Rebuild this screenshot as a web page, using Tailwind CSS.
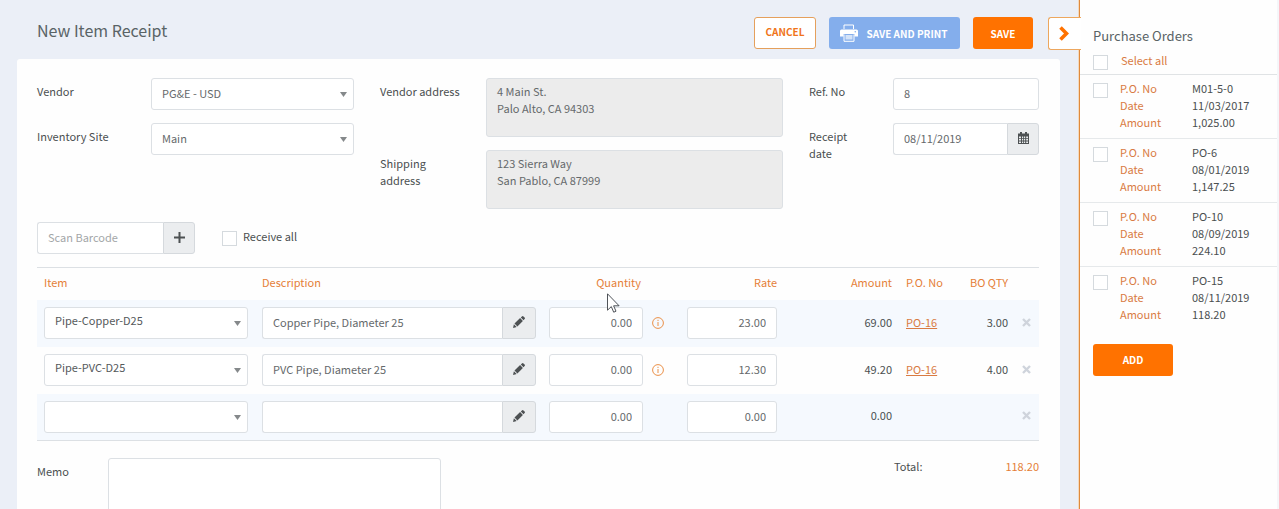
<!DOCTYPE html>
<html lang="en">

<head>
    <meta charset="UTF-8">
    <meta name="viewport" content="width=device-width, initial-scale=1.0">
    <title>New Item Receipt</title>
    <script src="https://cdn.jsdelivr.net/npm/@tailwindcss/browser@4"></script>
</head>

<body class="flex h-screen overflow-hidden bg-[#ebeff7] font-['Noto_Sans_CJK_SC','Open_Sans',sans-serif] text-[11px] leading-[17px] text-[#4a4f50]">

    <main class="flex min-w-0 flex-1 flex-col pl-[17px] pr-[19px]">
        <header class="flex h-[59px] shrink-0 items-start pt-[17px] pl-5 pr-[27px]">
            <h1 class="flex-1 text-[16px] leading-[26px] text-[#596366]">New Item Receipt</h1>
            <div class="flex gap-[13px]">
                <button type="button" class="h-8 w-[62px] rounded-[3px] border border-[#e5a05c] bg-white pb-[3px] text-[10px] font-bold text-[#f0741a]">CANCEL</button>
                <button type="button" class="flex h-8 w-[131px] items-center justify-center gap-[9px] rounded-[3px] bg-[#84aeec] pr-[2px] text-[10px] font-bold text-white">
                    <svg class="h-[18px] w-[18px]" viewBox="0 0 18 18" fill="none">
                        <path d="M4 5V1h9.500v4" stroke="currentColor" stroke-width="1" />
                        <path d="M1.500 5.500h15a1.500 1.500 0 0 1 1.500 1.500v5.500h-3.500V10h-11v2.500H0V7a1.500 1.500 0 0 1 1.500-1.500z" fill="currentColor" />
                        <circle cx="15.300" cy="7.800" r=".8" fill="#84aeec" />
                        <path d="M4 10.500v6.800h10v-6.800" stroke="currentColor" stroke-width="1" />
                        <path d="M5.500 11h7v4.500h-7z" fill="currentColor" fill-opacity=".65" />
                    </svg>
                    SAVE AND PRINT
                </button>
                <button type="button" class="h-8 w-[60px] rounded-[3px] bg-[#ff7200] text-[10px] font-bold text-white">SAVE</button>
            </div>
        </header>

        <section class="flex-1 rounded-t-[3px] bg-[#fefefe] pl-5 pr-[21px] pt-[19px]">
            <!-- Receipt details -->
            <div class="flex items-start">
                <div class="grid flex-1 grid-cols-[114px_1fr] gap-y-[13px]">
                    <label for="vendor" class="pt-[5px]">Vendor</label>
                    <div class="relative">
                        <select id="vendor" class="h-8 w-full appearance-none rounded-[3px] border border-[#dce0e4] bg-white pb-px pl-[10px] text-[#65696b]">
                            <option>PG&amp;E - USD</option>
                        </select>
                        <svg class="pointer-events-none absolute right-[7px] top-[14px] h-[5px] w-[7px]" viewBox="0 0 7 5"><path d="M0 0h7L3.500 5z" fill="#85898b" /></svg>
                    </div>
                    <label for="site" class="pt-[5px]">Inventory Site</label>
                    <div class="relative">
                        <select id="site" class="h-8 w-full appearance-none rounded-[3px] border border-[#dce0e4] bg-white pb-px pl-[10px] text-[#65696b]">
                            <option>Main</option>
                        </select>
                        <svg class="pointer-events-none absolute right-[7px] top-[14px] h-[5px] w-[7px]" viewBox="0 0 7 5"><path d="M0 0h7L3.500 5z" fill="#85898b" /></svg>
                    </div>
                </div>
                <div class="ml-[26px] grid w-[403px] grid-cols-[106px_1fr] gap-y-[13px]">
                    <label for="vendorAddress" class="pt-[5px]">Vendor address</label>
                    <textarea id="vendorAddress" readonly class="h-[59px] resize-none overflow-hidden rounded-[3px] border border-[#dce0e4] bg-[#ececec] px-[10px] py-1 text-[#65696b]">4 Main St.
Palo Alto, CA 94303</textarea>
                    <label for="shippingAddress" class="pr-8 pt-[5px]">Shipping address</label>
                    <textarea id="shippingAddress" readonly class="h-[59px] resize-none overflow-hidden rounded-[3px] border border-[#dce0e4] bg-[#ececec] px-[10px] py-1 text-[#65696b]">123 Sierra Way
San Pablo, CA 87999</textarea>
                </div>
                <div class="ml-[26px] grid w-[230px] grid-cols-[84px_1fr] gap-y-[13px]">
                    <label for="refNo" class="pt-[5px]">Ref. No</label>
                    <input id="refNo" type="text" value="8" class="h-8 w-full rounded-[3px] border border-[#dce0e4] bg-white px-[10px] pb-[2px] text-[#65696b]">
                    <label for="receiptDate" class="pr-8 pt-[5px]">Receipt date</label>
                    <div class="flex h-8">
                        <input id="receiptDate" type="text" value="08/11/2019" class="w-full min-w-0 flex-1 rounded-l-[3px] border border-r-0 border-[#dce0e4] bg-white px-[10px] pb-px text-[#65696b]">
                        <button type="button" aria-label="Pick date" class="flex w-8 items-center justify-center rounded-r-[3px] border border-[#d5d9dd] bg-[#ebedef] pb-[2px]">
                            <svg class="h-3 w-[11px]" viewBox="0 0 11 12">
                                <path d="M2 0h2v1.500h3V0h2v1.500h2V12H0V1.500h2z" fill="#4d5153" />
                                <path d="M1 4.500h2v1.800H1zM4 4.500h1.200v1.800H4zM6 4.500h1.200v1.800H6zM8.200 4.500H10v1.800H8.200zM1 7h2v1.600H1zM4 7h1.200v1.600H4zM6 7h1.200v1.600H6zM8.200 7H10v1.600H8.200zM1 9.400h2V11H1zM4 9.400h1.200V11H4zM6 9.400h1.200V11H6zM8.200 9.400H10V11H8.200z" fill="#ebedef" />
                            </svg>
                        </button>
                    </div>
                </div>
            </div>

            <!-- Barcode -->
            <div class="mt-[13px] flex h-8 items-center">
                <input type="text" aria-label="Scan Barcode" placeholder="Scan Barcode" class="h-8 w-[126px] rounded-l-[3px] border border-r-0 border-[#dce0e4] bg-white px-[10px] pb-[2px] placeholder:text-[#a3a6a8]">
                <button type="button" aria-label="Add barcode" class="flex h-8 w-8 items-center justify-center rounded-r-[3px] border border-[#d5d9dd] bg-[#ebedef] pb-[2px]">
                    <svg class="h-[11px] w-[11px]" viewBox="0 0 11 11"><path d="M5.500 0v11M0 5.500h11" stroke="#4d5153" stroke-width="2" /></svg>
                </button>
                <input id="receiveAll" type="checkbox" class="ml-[27px] h-[15px] w-[15px] appearance-none border border-[#d5dade] bg-white">
                <label for="receiveAll" class="ml-[6px] pb-1">Receive all</label>
            </div>

            <!-- Lines -->
            <table class="mt-[13px] w-full table-fixed border-y border-[#dce0e4]">
                <colgroup>
                    <col class="w-[218px]">
                    <col>
                    <col class="w-[108px]">
                    <col class="w-[30px]">
                    <col class="w-[104px]">
                    <col class="w-[115px]">
                    <col class="w-[60px]">
                    <col class="w-[56px]">
                    <col class="w-[24px]">
                </colgroup>
                <thead class="text-[#e57f38]">
                    <tr class="h-8">
                        <th class="px-[7px] pb-[2px] text-left font-normal">Item</th>
                        <th class="px-[7px] pb-[2px] text-left font-normal">Description</th>
                        <th class="relative px-[9px] pb-[2px] text-right font-normal">
                            Quantity
                            <svg class="absolute left-[65px] top-[25px] z-10 h-5 w-[13px]" viewBox="0 0 13 20">
                                <path d="M.5 .8v16.400l3.800-3.600 2.400 5.600 2.300-1-2.400-5.400h5.500z" fill="#fff" stroke="#3b3f46" stroke-width=".9" />
                            </svg>
                        </th>
                        <th></th>
                        <th class="px-[7px] pb-[2px] text-right font-normal">Rate</th>
                        <th class="px-[7px] pb-[2px] text-right font-normal">Amount</th>
                        <th class="px-[7px] pb-[2px] text-left font-normal">P.O. No</th>
                        <th class="px-[7px] pb-[2px] text-right font-normal">BO QTY</th>
                        <th></th>
                    </tr>
                </thead>
                <tbody id="lineas"></tbody>
            </table>

            <div class="mt-[17px] flex items-start">
                <label for="memo" class="w-[71px] pt-[5px]">Memo</label>
                <textarea id="memo" class="h-[72px] w-[333px] resize-none rounded-[3px] border border-[#dce0e4] bg-white px-[10px] py-1"></textarea>
                <div class="ml-auto flex w-[145px] justify-between">
                    <span>Total:</span>
                    <span class="text-[#e57f38]">118.20</span>
                </div>
            </div>
        </section>
    </main>

    <aside class="relative w-[200px] shrink-0 border-l border-r-2 border-l-[#e08a3c] border-r-[#f5f6f9] bg-[#fefefe] pt-[26px] shadow-[-1px_0_0_#f3d9bd]">
        <button type="button" aria-label="Hide purchase orders" class="absolute -left-8 top-[17px] flex h-[33px] w-[33px] items-center rounded-l-[3px] border border-r-0 border-[#eda75e] bg-white pl-[10px]">
            <svg class="h-[15px] w-[10px]" viewBox="0 0 10 15"><path d="M1.500 1.500l6 6-6 6" fill="none" stroke="#ff7200" stroke-width="3.600" /></svg>
        </button>
        <h2 class="pl-[13px] text-[13px] leading-5 text-[#596366]">Purchase Orders</h2>
        <div class="flex h-[29px] items-start border-b border-[#e0e3e5] pl-[13px] pt-[6px]">
            <input id="selectAll" type="checkbox" class="mt-[3px] h-[15px] w-[15px] appearance-none border border-[#d5dade] bg-white">
            <label for="selectAll" class="ml-[13px] text-[#d97b43]">Select all</label>
        </div>
        <div id="ordenes"></div>
        <button type="button" class="ml-[13px] mt-[13px] h-8 w-20 rounded-[3px] bg-[#ff7200] pb-[2px] text-[10px] font-bold text-white">ADD</button>
    </aside>

    <script>
        const lineas = [
            { item: "Pipe-Copper-D25", desc: "Copper Pipe, Diameter 25", qty: "0.00", rate: "23.00", amount: "69.00", po: "PO-16", bo: "3.00" },
            { item: "Pipe-PVC-D25", desc: "PVC Pipe, Diameter 25", qty: "0.00", rate: "12.30", amount: "49.20", po: "PO-16", bo: "4.00" },
            { item: "", desc: "", qty: "0.00", rate: "0.00", amount: "0.00", po: "", bo: "" },
        ];

        const ordenes = [
            { no: "M01-5-0", date: "11/03/2017", amount: "1,025.00" },
            { no: "PO-6", date: "08/01/2019", amount: "1,147.25" },
            { no: "PO-10", date: "08/09/2019", amount: "224.10" },
            { no: "PO-15", date: "08/11/2019", amount: "118.20" },
        ];

        const infoHTML = `<button type="button" aria-label="Info" class="block">
            <svg class="h-3 w-3" viewBox="0 0 12 12" fill="none" stroke="#ea9048">
                <circle cx="6" cy="6" r="5.400" />
                <path d="M6 5v4M6 2.800v1.200" />
            </svg>
        </button>`;

        document.getElementById("lineas").innerHTML = lineas.map((linea) => `
            <tr class="h-[47px] odd:bg-[#f5f9fe]">
                <td class="px-[7px]">
                    <div class="relative">
                        <select aria-label="Item" class="block h-8 w-full appearance-none rounded-[3px] border border-[#dce0e4] bg-white pb-[5px] pl-[10px] text-[#55595b]">
                            <option>${linea.item}</option>
                        </select>
                        <svg class="pointer-events-none absolute right-[7px] top-[14px] h-[5px] w-[7px]" viewBox="0 0 7 5"><path d="M0 0h7L3.500 5z" fill="#85898b" /></svg>
                    </div>
                </td>
                <td class="pl-[7px] pr-[6px]">
                    <div class="flex h-8">
                        <input type="text" aria-label="Description" value="${linea.desc}" class="w-full min-w-0 flex-1 rounded-l-[3px] border border-r-0 border-[#dce0e4] bg-white px-[10px] pb-px text-[#65696b]">
                        <button type="button" aria-label="Edit description" class="flex w-[34px] items-center justify-center rounded-r-[3px] border border-[#d5d9dd] bg-[#ebedef] pb-[2px]">
                            <svg class="h-3 w-3" viewBox="0 0 12 12" fill="#4d5153">
                                <path d="M0 12l.9-3.700L3.700 11zM1.500 7.600l5.600-5.500 2.800 2.800-5.500 5.600zM7.800 1.500L8.900.4a1.200 1.200 0 0 1 1.600 0l1.100 1.100a1.200 1.200 0 0 1 0 1.600l-1.100 1.100z" />
                            </svg>
                        </button>
                    </div>
                </td>
                <td class="px-[7px]">
                    <input type="text" aria-label="Quantity" value="${linea.qty}" class="block h-8 w-full rounded-[3px] border border-[#dce0e4] bg-white px-[10px] pb-[2px] text-right text-[#65696b]">
                </td>
                <td class="pl-[2px]">${linea.po ? infoHTML : ""}</td>
                <td class="px-[7px]">
                    <input type="text" aria-label="Rate" value="${linea.rate}" class="block h-8 w-full rounded-[3px] border border-[#dce0e4] bg-white px-[10px] pb-[2px] text-right text-[#65696b]">
                </td>
                <td class="px-[7px] pb-[2px] text-right">${linea.amount}</td>
                <td class="px-[7px] pb-[2px]">${linea.po ? `<a href="#" class="text-[#d97b43] underline">${linea.po}</a>` : ""}</td>
                <td class="px-[7px] pb-[2px] text-right">${linea.bo}</td>
                <td class="pb-[2px] pl-[7px]">
                    <button type="button" aria-label="Remove line" class="block">
                        <svg class="h-[9px] w-[9px]" viewBox="0 0 9 9"><path d="M1 1l7 7M8 1L1 8" stroke="#cfd4dc" stroke-width="2.400" /></svg>
                    </button>
                </td>
            </tr>`).join("");

        document.getElementById("ordenes").innerHTML = ordenes.map((orden, i) => `
            <div class="flex h-16 border-b border-[#e6e9eb] pl-[13px] pt-[5px] last:border-b-0">
                <input id="orden${i}" type="checkbox" class="mt-[3px] h-[15px] w-[15px] appearance-none border border-[#d5dade] bg-white">
                <label for="orden${i}" class="ml-3 grid grid-cols-[72px_auto] content-start">
                    <span class="text-[#d97b43]">P.O. No</span><span>${orden.no}</span>
                    <span class="text-[#d97b43]">Date</span><span>${orden.date}</span>
                    <span class="text-[#d97b43]">Amount</span><span>${orden.amount}</span>
                </label>
            </div>`).join("");
    </script>
</body>

</html>
